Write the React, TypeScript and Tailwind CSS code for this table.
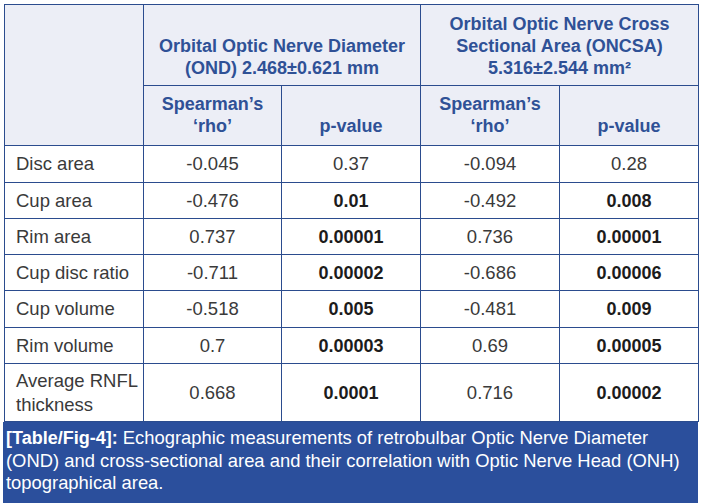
import React from "react"

type Row = {
  label: React.ReactNode
  rho1: string
  p1: string
  bold1: boolean
  rho2: string
  p2: string
  bold2: boolean
  h: string
}

const rows: Row[] = [
  { label: "Disc area", rho1: "-0.045", p1: "0.37", bold1: false, rho2: "-0.094", p2: "0.28", bold2: false, h: "h-[37px]" },
  { label: "Cup area", rho1: "-0.476", p1: "0.01", bold1: true, rho2: "-0.492", p2: "0.008", bold2: true, h: "h-[36px]" },
  { label: "Rim area", rho1: "0.737", p1: "0.00001", bold1: true, rho2: "0.736", p2: "0.00001", bold2: true, h: "h-[36px]" },
  { label: "Cup disc ratio", rho1: "-0.711", p1: "0.00002", bold1: true, rho2: "-0.686", p2: "0.00006", bold2: true, h: "h-[36px]" },
  { label: "Cup volume", rho1: "-0.518", p1: "0.005", bold1: true, rho2: "-0.481", p2: "0.009", bold2: true, h: "h-[37px]" },
  { label: "Rim volume", rho1: "0.7", p1: "0.00003", bold1: true, rho2: "0.69", p2: "0.00005", bold2: true, h: "h-[36px]" },
  {
    label: (
      <>
        Average RNFL
        <br />
        thickness
      </>
    ),
    rho1: "0.668",
    p1: "0.0001",
    bold1: true,
    rho2: "0.716",
    p2: "0.00002",
    bold2: true,
    h: "h-[58px]",
  },
]

const cell = "border border-[#2b4c8e] p-0"
const head = "text-[#2f5196] font-bold text-[18px] leading-[22px]"

export default function App() {
  return (
    <div className="w-[702px] h-[503px] bg-white overflow-hidden pl-[3px] pt-[4px] font-['Liberation_Sans',Arial,sans-serif] text-[18.5px] leading-[22px]">
      <table className="table-fixed border-collapse w-[694px] ml-px">
        <colgroup>
          <col className="w-[139px]" />
          <col className="w-[138px]" />
          <col className="w-[139px]" />
          <col className="w-[139px]" />
          <col className="w-[139px]" />
        </colgroup>
        <thead className="bg-[#eceef6]">
          <tr className="h-[81px]">
            <th className={cell} rowSpan={2}></th>
            <th colSpan={2} className={`${cell} ${head} align-bottom pb-[6px]`}>
              Orbital Optic Nerve Diameter
              <br />
              (OND) 2.468±0.621 mm
            </th>
            <th colSpan={2} className={`${cell} ${head} align-bottom pb-[6px]`}>
              Orbital Optic Nerve Cross
              <br />
              Sectional Area (ONCSA)
              <br />
              5.316±2.544 mm²
            </th>
          </tr>
          <tr className="h-[60px]">
            <th className={`${cell} ${head} align-bottom pb-[8px]`}>
              Spearman’s
              <br />
              ‘rho’
            </th>
            <th className={`${cell} ${head} align-bottom pb-[8px]`}>p-value</th>
            <th className={`${cell} ${head} align-bottom pb-[8px]`}>
              Spearman’s
              <br />
              ‘rho’
            </th>
            <th className={`${cell} ${head} align-bottom pb-[8px]`}>p-value</th>
          </tr>
        </thead>
        <tbody className="text-[#3a3a3a]">
          {rows.map((r, i) => (
            <tr key={i} className={r.h}>
              <td className={`${cell} pl-[11px] text-left leading-[24px]`}>{r.label}</td>
              <td className={`${cell} text-center`}>{r.rho1}</td>
              <td className={`${cell} text-center ${r.bold1 ? "font-bold text-[18px] text-[#1c1c1c]" : ""}`}>{r.p1}</td>
              <td className={`${cell} text-center`}>{r.rho2}</td>
              <td className={`${cell} text-center ${r.bold2 ? "font-bold text-[18px] text-[#1c1c1c]" : ""}`}>{r.p2}</td>
            </tr>
          ))}
        </tbody>
      </table>
      <div className="w-[695px] bg-[#2b4f9c] text-white px-[3px] pt-[5px] pb-[14px] text-[18.4px] leading-[22.5px]">
        <span className="font-bold text-[18px]">[Table/Fig-4]:</span> Echographic measurements of retrobulbar Optic Nerve Diameter
        <br />
        (OND) and cross-sectional area and their correlation with Optic Nerve Head (ONH)
        <br />
        topographical area.
      </div>
    </div>
  )
}
